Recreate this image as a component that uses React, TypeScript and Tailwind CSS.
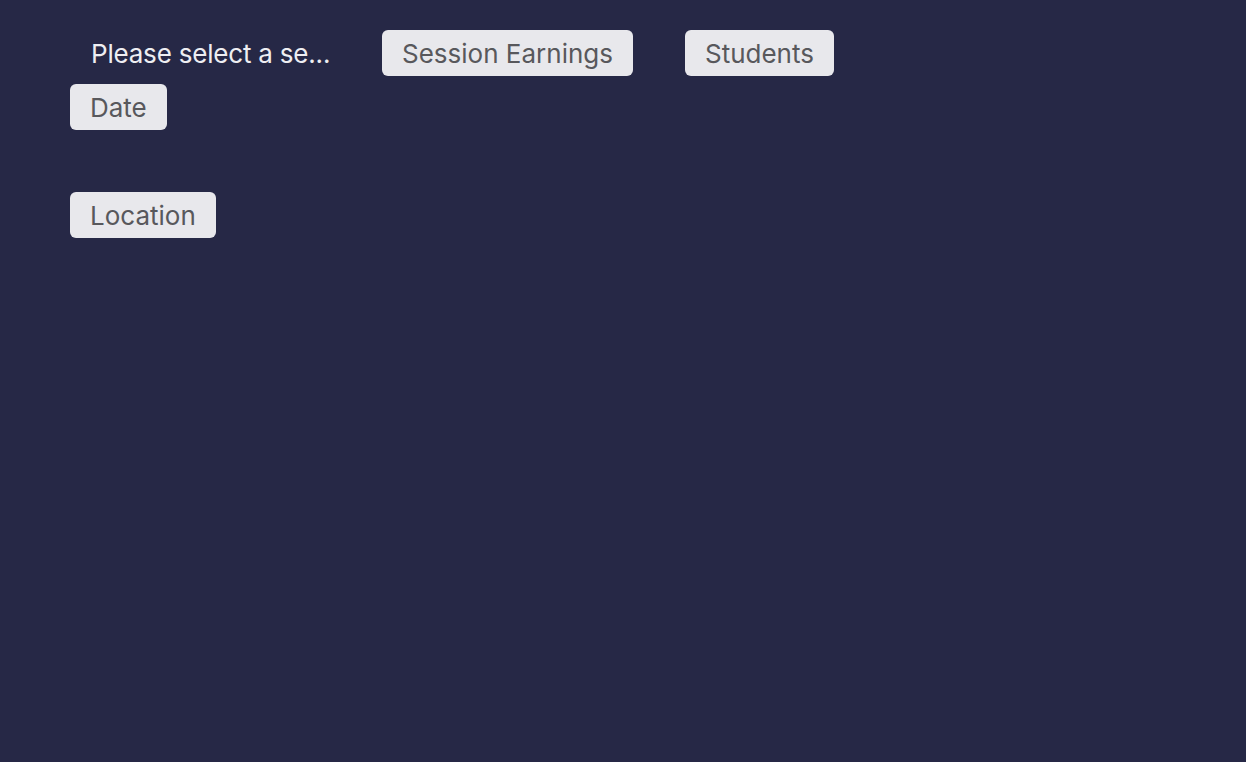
import React from "react";

const btn =
  "h-[46px] flex items-center pt-[2px] px-[20px] rounded-[6px] bg-[#e8e8ec] text-[#58585c] text-[26px] leading-none whitespace-nowrap";

export default function App() {
  return (
    <div
      className="w-[1246px] h-[762px] bg-[#262846] pt-[30px] pl-[70px]"
      style={{ fontFamily: "Inter, 'Noto Sans', sans-serif" }}
    >
      <div className="flex items-center gap-[52px]">
        <div className="w-[260px] shrink-0 h-[46px] flex items-center pt-[2px] pl-[21px] text-[#eeeef2] text-[26px] leading-none whitespace-nowrap tracking-[-0.2px]">
          Please select a se...
        </div>
        <button className={btn}>Session Earnings</button>
        <button className={btn}>Students</button>
      </div>
      <div className="flex mt-[8px]">
        <button className={btn}>Date</button>
      </div>
      <div className="flex mt-[62px]">
        <button className={btn}>Location</button>
      </div>
    </div>
  );
}
